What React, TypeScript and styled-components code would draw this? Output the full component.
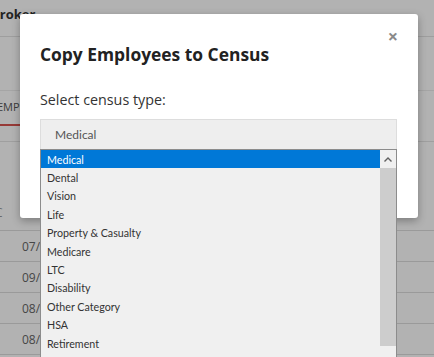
import React from 'react'
import styled, { createGlobalStyle } from 'styled-components'

const GlobalStyle = createGlobalStyle`
  html, body {
    margin: 0;
    padding: 0;
    background: #ffffff;
    overflow: hidden;
  }
  body {
    font-family: 'Open Sans', 'Liberation Sans', sans-serif;
    color: #333333;
  }
`

const Page = styled.div`
  position: relative;
  width: 434px;
  height: 357px;
  overflow: hidden;
  background: #ffffff;
`

const Header = styled.div`
  height: 37px;
  box-sizing: border-box;
  border-bottom: 1px solid #e2e2e2;
  display: flex;
  align-items: flex-start;
  padding-top: 5px;
`

const Brand = styled.div`
  margin-left: -9px;
  font-size: 13px;
  font-weight: 700;
  color: #333333;
`

const Toolbar = styled.div`
  height: 53px;
  border-bottom: 1px solid #ececec;
`

const Tabs = styled.div`
  display: flex;
  height: 50px;
  border-bottom: 1px solid #e4e4e4;
`

const Tab = styled.div<{ $active?: boolean }>`
  margin-left: -3px;
  width: 23px;
  padding-top: 8px;
  height: 35px;
  box-sizing: border-box;
  font-size: 11px;
  color: #555555;
  white-space: nowrap;
  overflow: hidden;
  border-bottom: 2px solid ${({ $active }) => ($active ? '#d9534f' : 'transparent')};
`

const TableHead = styled.div`
  height: 89px;
  display: flex;
  align-items: flex-end;
  padding-bottom: 9px;
  box-sizing: border-box;
  border-bottom: 1px solid #dddddd;
`

const HeadCell = styled.div`
  margin-left: -5px;
  font-size: 12px;
  color: #999999;
`

const Row = styled.div`
  height: 31px;
  border-bottom: 1px solid #dddddd;
  box-sizing: border-box;
  display: flex;
  align-items: center;
  padding-left: 22px;
  font-size: 12px;
  color: #666666;
`

const Overlay = styled.div`
  position: absolute;
  inset: 0;
  background: rgba(0, 0, 0, 0.3);
`

const Modal = styled.div`
  position: absolute;
  left: 20px;
  top: 14px;
  width: 398px;
  height: 204px;
  box-sizing: border-box;
  background: #ffffff;
  border-radius: 3px;
  box-shadow: 0 3px 9px rgba(0, 0, 0, 0.3);
  padding: 28px 20px 0 20px;
`

const Close = styled.div`
  position: absolute;
  right: 20px;
  top: 12px;
  font-size: 18px;
  font-weight: 700;
  color: #8a8a8a;
  line-height: 20px;
`

const Title = styled.h4`
  margin: 0;
  font-size: 17.4px;
  font-weight: 700;
  line-height: 24px;
  color: #222222;
`

const Label = styled.div`
  margin-top: 24px;
  font-size: 14.3px;
  line-height: 20px;
  color: #333333;
`

const SelectBox = styled.div`
  margin-top: 9px;
  height: 30px;
  width: 357px;
  box-sizing: border-box;
  background: #eeeeee;
  border: 1px solid #dddddd;
  border-bottom: none;
  display: flex;
  align-items: center;
  padding-left: 14px;
  font-family: Lato, 'Open Sans', sans-serif;
  font-size: 12px;
  color: #555555;
`

const List = styled.div`
  position: absolute;
  left: 40px;
  top: 149px;
  width: 357px;
  height: 220px;
  box-sizing: border-box;
  background: #f0f0f0;
  border: 1px solid #8c8c8c;
  display: flex;
  font-family: Lato, 'Open Sans', sans-serif;
`

const Options = styled.div`
  flex: 1;
`

const Option = styled.div<{ $selected?: boolean }>`
  height: 18.4px;
  display: flex;
  align-items: center;
  padding-left: 6px;
  font-size: 10.7px;
  color: ${({ $selected }) => ($selected ? '#ffffff' : '#333333')};
  background: ${({ $selected }) => ($selected ? '#0078d7' : 'transparent')};
`

const Scrollbar = styled.div`
  width: 16px;
  display: flex;
  flex-direction: column;
  background: #f0f0f0;
`

const ScrollButton = styled.div`
  height: 18px;
  display: flex;
  align-items: center;
  justify-content: center;
`

const Thumb = styled.div`
  height: 178px;
  background: #cdcdcd;
`

const options = [
  'Medical',
  'Dental',
  'Vision',
  'Life',
  'Property & Casualty',
  'Medicare',
  'LTC',
  'Disability',
  'Other Category',
  'HSA',
  'Retirement',
  'Cafeteria',
]

const dates = ['07/01/2020', '09/01/2020', '08/01/2020', '08/01/2020']

const App = () => (
  <>
    <GlobalStyle />
    <Page>
      <Header>
        <Brand>Broker</Brand>
      </Header>
      <Toolbar />
      <Tabs>
        <Tab $active>EMPLOYEES</Tab>
      </Tabs>
      <TableHead>
        <HeadCell>C</HeadCell>
      </TableHead>
      {dates.map((d, i) => (
        <Row key={i}>{d}</Row>
      ))}
      <Overlay />
      <Modal>
        <Close>×</Close>
        <Title>Copy Employees to Census</Title>
        <Label>Select census type:</Label>
        <SelectBox>Medical</SelectBox>
      </Modal>
      <List>
        <Options>
          {options.map((o, i) => (
            <Option key={o} $selected={i === 0}>
              {o}
            </Option>
          ))}
        </Options>
        <Scrollbar>
          <ScrollButton>
            <svg width="8" height="5" viewBox="0 0 8 5">
              <path d="M0.5 4.5 L4 1 L7.5 4.5" fill="none" stroke="#606060" strokeWidth="1.4" />
            </svg>
          </ScrollButton>
          <Thumb />
        </Scrollbar>
      </List>
    </Page>
  </>
)

export default App
